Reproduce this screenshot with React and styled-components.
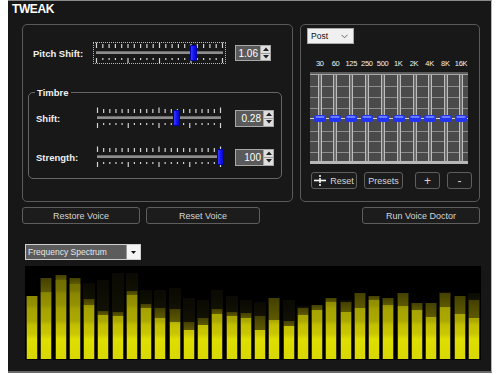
import React from "react";
import styled, { createGlobalStyle } from "styled-components";

const Global = createGlobalStyle`
  html, body { margin: 0; padding: 0; background: #ffffff; }
  body { font-family: "Liberation Sans", Arial, sans-serif; }
  * { box-sizing: border-box; }
`;

const Window = styled.div`
  margin-left: 8px;
  width: 484px;
  height: 373px;
  background: #171717;
  border-top: 1px solid #8a8a8a;
  border-right: 1px solid #b4b4b4;
  border-bottom: 2px solid #6a6a6a;
  display: flex;
  flex-direction: column;
`;

const Title = styled.div`
  height: 23px;
  padding: 1px 0 0 4px;
  font-size: 12px;
  line-height: 14px;
  font-weight: 700;
  letter-spacing: -0.4px;
  color: #ffffff;
`;

const TopRow = styled.div`
  display: flex;
  gap: 7px;
  padding-left: 14px;
  height: 178px;
`;

const Panel = styled.div`
  width: ${(p) => p.$w}px;
  height: 178px;
  border: 1px solid #5a5a5a;
  border-radius: 5px;
  background: #181818;
  display: flex;
  flex-direction: column;
  align-items: flex-start;
  padding-top: ${(p) => p.$pt}px;
`;

const Row = styled.div`
  display: flex;
  align-items: center;
  height: 22px;
  margin-top: ${(p) => p.$mt || 0}px;
`;

const Label = styled.div`
  width: ${(p) => p.$w}px;
  padding-left: ${(p) => p.$pl}px;
  font-size: 9.5px;
  font-weight: 700;
  color: #f0f0f0;
  white-space: nowrap;
`;

const SliderBox = styled.div`
  position: relative;
  width: ${(p) => p.$w}px;
  height: 22px;
  display: flex;
  flex-direction: column;
  margin-right: ${(p) => p.$mr}px;
  outline: ${(p) => (p.$focus ? "1px dotted #b8b8b8" : "none")};
  outline-offset: -1px;
`;

const TrackZone = styled.div`
  height: 8px;
  padding: 2px 3px 0;
`;

const Track = styled.div`
  height: 3px;
  background: #8e8e8e;
  border-top: 1px solid #6a6a6a;
`;

const Thumb = styled.div`
  position: absolute;
  top: 3px;
  width: 7px;
  height: 16px;
  border-radius: 1px;
  background: linear-gradient(to right, #3a3aff, #1010f0 60%, #0a0ac0);
  border: 1px solid #0000a8;
`;

function Ticks({ w, bottom }) {
  const n = 21;
  const step = (w - 7) / (n - 1);
  return (
    <svg width={w} height="7" style={{ display: "block" }}>
      {Array.from({ length: n }).map((_, i) => {
        const x = 3.5 + i * step;
        let y1, y2;
        if (bottom) {
          const long = i % 5 === 0;
          y1 = 1;
          y2 = long ? 6 : 3;
        } else {
          const long = i % 10 === 0;
          y1 = long ? 0.5 : 2;
          y2 = 6;
        }
        return (
          <line key={i} x1={x} x2={x} y1={y1} y2={y2} stroke="#d4d4d4" strokeWidth="1.2" />
        );
      })}
    </svg>
  );
}

function Slider({ w, pos, focus, mr }) {
  return (
    <SliderBox $w={w} $focus={focus} $mr={mr}>
      <Ticks w={w} />
      <TrackZone>
        <Track />
      </TrackZone>
      <Ticks w={w} bottom />
      <Thumb style={{ left: `${pos * (w - 7)}px` }} />
    </SliderBox>
  );
}

const ValueBox = styled.div`
  display: flex;
  width: ${(p) => p.$w}px;
  height: ${(p) => p.$h}px;
`;

const ValueField = styled.div`
  flex: 1;
  background: #5a5a5a;
  border: 1px solid #a8a8a8;
  color: #ffffff;
  font-size: 10px;
  text-align: right;
  padding-right: 2px;
  display: flex;
  align-items: center;
  justify-content: flex-end;
`;

const Spinner = styled.div`
  width: 10px;
  display: flex;
  flex-direction: column;
  background: #dedede;
  border: 1px solid #a8a8a8;
  border-left: none;
`;

const SpinHalf = styled.div`
  flex: 1;
  display: flex;
  align-items: center;
  justify-content: center;
  border-bottom: ${(p) => (p.$top ? "1px solid #9a9a9a" : "none")};
`;

function Value({ v, w, h }) {
  return (
    <ValueBox $w={w} $h={h}>
      <ValueField>{v}</ValueField>
      <Spinner>
        <SpinHalf $top>
          <svg width="6" height="4"><path d="M0 4 L3 0.5 L6 4 Z" fill="#222" /></svg>
        </SpinHalf>
        <SpinHalf>
          <svg width="6" height="4"><path d="M0 0 L3 3.5 L6 0 Z" fill="#222" /></svg>
        </SpinHalf>
      </Spinner>
    </ValueBox>
  );
}

const Group = styled.div`
  position: relative;
  margin: 28px 0 0 5px;
  width: 254px;
  height: 87px;
  border: 1px solid #666666;
  border-radius: 5px;
  padding-top: 14px;
`;

const Legend = styled.div`
  position: absolute;
  top: -7px;
  left: 6px;
  padding: 0 2px;
  background: #181818;
  font-size: 9.5px;
  font-weight: 700;
  color: #f0f0f0;
  line-height: 13px;
`;

const Select = styled.div`
  margin-left: 6px;
  width: 47px;
  height: 16px;
  background: #f0f0f0;
  border: 1px solid #a9a9a9;
  display: flex;
  align-items: center;
  justify-content: space-between;
  padding: 0 5px 0 3px;
  font-size: 8.5px;
  color: #111;
`;

const FreqLabels = styled.div`
  margin: 15px 0 0 9px;
  width: 158px;
  height: 10px;
  padding-left: 2px;
  display: grid;
  grid-template-columns: repeat(10, 15.7px);
  font-size: 7.5px;
  line-height: 10px;
  letter-spacing: -0.3px;
  color: #f2f2f2;
  text-align: center;
  white-space: nowrap;
`;

const EqWrap = styled.div`
  margin: 3px 0 0 9px;
  width: 158px;
  height: 92px;
  display: flex;
`;

const EqButtons = styled.div`
  display: flex;
  margin: 8px 0 0 10px;
`;

const Btn = styled.button`
  width: ${(p) => p.$w}px;
  height: 17px;
  margin-left: ${(p) => p.$ml || 0}px;
  padding: 0;
  background: #1c1c1c;
  border: 1px solid #5e5e5e;
  border-radius: 3px;
  color: #d6d6d6;
  font-family: "Liberation Sans", Arial, sans-serif;
  font-size: ${(p) => p.$fs || 9}px;
  display: flex;
  align-items: center;
  justify-content: center;
  gap: 4px;
  ${(p) => (p.$auto ? "margin-left: auto;" : "")}
`;

const ActionRow = styled.div`
  display: flex;
  margin-top: 5px;
  padding: 0 11px 0 14px;
  height: 17px;
`;

const SpecSelect = styled.div`
  margin: 20px 0 0 17px;
  width: 116px;
  height: 16px;
  border: 1px solid #cfcfcf;
  display: flex;
`;

const SpecField = styled.div`
  flex: 1;
  background: #5c5c5c;
  color: #e6e6e6;
  font-size: 8.5px;
  padding-left: 2px;
  display: flex;
  align-items: center;
  border-right: 1px solid #9a9a9a;
`;

const SpecDrop = styled.div`
  width: 13px;
  background: #f4f4f4;
  display: flex;
  align-items: center;
  justify-content: center;
`;

const Spectrum = styled.div`
  margin: 6px 0 0 17px;
  width: 456px;
  height: 94px;
  background: #000000;
  display: flex;
  align-items: flex-end;
  justify-content: space-between;
  padding: 0 1px 1px;
`;

const BarCol = styled.div`
  width: 12px;
  height: 100%;
  display: flex;
  flex-direction: column;
  justify-content: flex-end;
`;

const Ghost = styled.div`
  background: linear-gradient(to bottom, #0a0903, #121104);
`;

const Cap = styled.div`
  background: linear-gradient(to bottom, #434000, #5e5a00);
  border-left: 1px solid #222000;
  border-right: 1px solid #222000;
`;

const Fill = styled.div`
  border-left: 1px solid #3a3800;
  border-right: 1px solid #3a3800;
  background-image: linear-gradient(
    to top,
    #d8d800 0px,
    #dede00 20px,
    #cac700 25px,
    #c2bf00 34px,
    #aca900 38px,
    #a5a200 50px,
    #959200 54px,
    #8b8800 65px,
    #777400 69px,
    #6a6700 93px
  );
  background-size: 100% 93px;
  background-position: bottom;
  background-repeat: no-repeat;
`;

// [capTop, fillTop, ghostTop] in screen y; bottom at 359
const BARS = [
  [296, 296, 296], [278, 292, 278], [275, 280, 275], [278, 284, 278],
  [299, 305, 283], [311, 315, 280], [312, 316, 273], [291, 295, 273],
  [304, 308, 290], [308, 318, 290], [309, 322, 288], [322, 330, 298],
  [318, 325, 300], [309, 314, 290], [312, 316, 296], [313, 318, 300],
  [316, 330, 302], [298, 320, 298], [321, 326, 300], [308, 315, 306],
  [305, 310, 305], [298, 302, 298], [302, 312, 300], [293, 308, 293],
  [296, 300, 296], [298, 305, 298], [293, 306, 293], [303, 310, 303],
  [303, 317, 303], [293, 307, 292], [296, 314, 296], [300, 318, 293],
];

const TRACKS = [10, 25, 41, 57, 73, 89, 105, 120, 136, 151];
const FREQS = ["30", "60", "125", "250", "500", "1K", "2K", "4K", "8K", "16K"];

function EqGraph() {
  return (
    <svg width="158" height="92" viewBox="0 0 158 92" style={{ display: "block" }}>
      <rect x="0" y="0" width="158" height="92" fill="#4a4a4a" />
      <rect x="0" y="0" width="158" height="3" fill="#5c5c5c" />
      <line x1="0" x2="158" y1="2.5" y2="2.5" stroke="#a8a8a8" />
      {[14, 25, 36, 59, 69, 80].map((y) => (
        <line key={y} x1="0" x2="158" y1={y + 0.5} y2={y + 0.5} stroke="#8e8e8e" />
      ))}
      <line x1="0" x2="158" y1="46.5" y2="46.5" stroke="#d4d4d4" />
      <rect x="0" y="89" width="158" height="3" fill="#b6b6b6" />
      {TRACKS.map((x) => (
        <g key={x}>
          <rect x={x - 2} y="3" width="4" height="86" fill="#bcbcbc" />
          <line x1={x} x2={x} y1="3" y2="89" stroke="#3a3a3a" strokeWidth="1.2" />
          <rect x={x - 6} y="43" width="12" height="7" rx="2.5" fill="#2233f2" />
          <rect x={x - 4.5} y="44" width="9" height="2" rx="1" fill="#6a7cff" />
        </g>
      ))}
    </svg>
  );
}

function ResetIcon() {
  return (
    <svg width="12" height="11" viewBox="0 0 12 11">
      <line x1="0" x2="12" y1="5.5" y2="5.5" stroke="#f4f4f4" strokeWidth="1.6" />
      <line x1="6" x2="6" y1="0" y2="11" stroke="#f4f4f4" strokeWidth="1.6" strokeDasharray="2 1" />
    </svg>
  );
}

export default function App() {
  return (
    <>
      <Global />
      <Window>
        <Title>TWEAK</Title>
        <TopRow>
          <Panel $w={271} $pt={17}>
            <Row>
              <Label $w={70} $pl={10}>Pitch Shift:</Label>
              <Slider w={133} pos={0.77} focus mr={9} />
              <Value v="1.06" w={36} h={16} />
            </Row>
            <Group>
              <Legend>Timbre</Legend>
              <Row>
                <Label $w={65} $pl={7}>Shift:</Label>
                <Slider w={130} pos={0.64} mr={11} />
                <Value v="0.28" w={39} h={17} />
              </Row>
              <Row $mt={17}>
                <Label $w={65} $pl={7}>Strength:</Label>
                <Slider w={130} pos={1} mr={11} />
                <Value v="100" w={39} h={17} />
              </Row>
            </Group>
          </Panel>
          <Panel $w={180} $pt={3}>
            <Select>
              <span>Post</span>
              <svg width="7" height="5" viewBox="0 0 7 5">
                <path d="M0.5 0.8 L3.5 3.8 L6.5 0.8" fill="none" stroke="#666" strokeWidth="1" />
              </svg>
            </Select>
            <FreqLabels>
              {FREQS.map((f) => (
                <span key={f}>{f}</span>
              ))}
            </FreqLabels>
            <EqWrap>
              <EqGraph />
            </EqWrap>
            <EqButtons>
              <Btn $w={46}>
                <ResetIcon />
                Reset
              </Btn>
              <Btn $w={39} $ml={7}>Presets</Btn>
              <Btn $w={25} $ml={12} $fs={12}>+</Btn>
              <Btn $w={25} $ml={7} $fs={12}>-</Btn>
            </EqButtons>
          </Panel>
        </TopRow>
        <ActionRow>
          <Btn $w={118}>Restore Voice</Btn>
          <Btn $w={114} $ml={6}>Reset Voice</Btn>
          <Btn $w={118} $auto>Run Voice Doctor</Btn>
        </ActionRow>
        <SpecSelect>
          <SpecField>Frequency Spectrum</SpecField>
          <SpecDrop>
            <svg width="5" height="3" viewBox="0 0 5 3">
              <path d="M0 0 L5 0 L2.5 3 Z" fill="#111" />
            </svg>
          </SpecDrop>
        </SpecSelect>
        <Spectrum>
          {BARS.map(([cap, fill, ghost], i) => (
            <BarCol key={i}>
              <Ghost style={{ height: `${cap - ghost}px` }} />
              <Cap style={{ height: `${fill - cap}px` }} />
              <Fill style={{ height: `${359 - fill}px` }} />
            </BarCol>
          ))}
        </Spectrum>
      </Window>
    </>
  );
}
